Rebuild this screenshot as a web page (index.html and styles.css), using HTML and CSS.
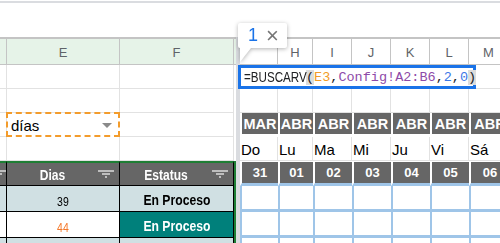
FILE: index.html
```html
<!DOCTYPE html>
<html lang="es">
<head>
  <meta charset="UTF-8">
  <title>Hoja de cálculo</title>
  <link rel="stylesheet" href="styles.css">
</head>
<body>
  <div class="topline"></div>

  <div class="sheet">
    <div class="freeze"></div>

    <!-- encabezado de columnas -->
    <div class="c hd sel"></div>
    <div class="c hd sel">E</div>
    <div class="c hd sel">F</div>
    <div class="c hd sel edge"></div>
    <div class="c hd"></div>
    <div class="c hd">H</div>
    <div class="c hd">I</div>
    <div class="c hd">J</div>
    <div class="c hd">K</div>
    <div class="c hd">L</div>
    <div class="c hd">M</div>

    <!-- fila 1 -->
    <div class="c"></div><div class="c"></div><div class="c"></div><div class="c edge"></div>
    <div class="c"></div><div class="c"></div><div class="c"></div><div class="c"></div>
    <div class="c"></div><div class="c"></div><div class="c"></div>

    <!-- fila 2 -->
    <div class="c"></div><div class="c"></div><div class="c"></div><div class="c edge"></div>
    <div class="c"></div><div class="c"></div><div class="c"></div><div class="c"></div>
    <div class="c"></div><div class="c"></div><div class="c"></div>

    <!-- fila 3: desplegable y meses -->
    <div class="c"></div>
    <div class="c dd">días<span class="dd-arrow"></span></div>
    <div class="c"></div><div class="c edge"></div>
    <div class="c mon">MAR</div>
    <div class="c mon">ABR</div>
    <div class="c mon">ABR</div>
    <div class="c mon">ABR</div>
    <div class="c mon">ABR</div>
    <div class="c mon">ABR</div>
    <div class="c mon">ABR</div>

    <!-- fila 4: días de la semana -->
    <div class="c"></div><div class="c"></div><div class="c"></div><div class="c edge"></div>
    <div class="c wd">Do</div>
    <div class="c wd">Lu</div>
    <div class="c wd">Ma</div>
    <div class="c wd">Mi</div>
    <div class="c wd">Ju</div>
    <div class="c wd">Vi</div>
    <div class="c wd">Sá</div>

    <!-- fila 5: cabecera de la tabla -->
    <div class="c th th-d"><svg class="flt" width="16" height="8" viewBox="0 0 16 8"><path d="M0 1h16M4 4h8M7 7h2" stroke="#dcdcdc" stroke-width="1.5"/></svg></div>
    <div class="c th"><span class="th-txt">Dias</span><svg class="flt" width="16" height="8" viewBox="0 0 16 8"><path d="M0 1h16M4 4h8M7 7h2" stroke="#dcdcdc" stroke-width="1.5"/></svg></div>
    <div class="c th"><span class="th-txt">Estatus</span><svg class="flt" width="16" height="8" viewBox="0 0 16 8"><path d="M0 1h16M4 4h8M7 7h2" stroke="#dcdcdc" stroke-width="1.5"/></svg></div>
    <div class="c edge green"></div>
    <div class="c num">31</div>
    <div class="c num">01</div>
    <div class="c num">02</div>
    <div class="c num">03</div>
    <div class="c num">04</div>
    <div class="c num">05</div>
    <div class="c num">06</div>

    <!-- fila 6 -->
    <div class="c td tint"></div>
    <div class="c td tint days"><span class="sq">39</span></div>
    <div class="c td tint status"><span class="sq">En Proceso</span></div>
    <div class="c edge green"></div>
    <div class="c box"></div><div class="c box"></div><div class="c box"></div><div class="c box"></div>
    <div class="c box"></div><div class="c box"></div><div class="c box"></div>

    <!-- fila 7 -->
    <div class="c td"></div>
    <div class="c td days late"><span class="sq">44</span></div>
    <div class="c td status teal"><span class="sq">En Proceso</span></div>
    <div class="c edge green"></div>
    <div class="c box"></div><div class="c box"></div><div class="c box"></div><div class="c box"></div>
    <div class="c box"></div><div class="c box"></div><div class="c box"></div>

    <!-- fila 8 -->
    <div class="c td tint"></div>
    <div class="c td tint"></div>
    <div class="c td tint"></div>
    <div class="c edge green"></div>
    <div class="c box"></div><div class="c box"></div><div class="c box"></div><div class="c box"></div>
    <div class="c box"></div><div class="c box"></div><div class="c box"></div>

    <!-- editor de fórmula y aviso -->
    <div class="editor">
      <span class="fx-name">=BUSCARV</span><span class="fx-args"><span class="par">(</span><span class="ref">E3</span>,<span class="rng">Config!A2:B6</span>,<span class="lit">2</span>,<span class="lit">0</span><span class="par">)</span></span>
    </div>
    <div class="tip">
      <span class="tip-num">1</span>
      <span class="tip-close">×</span>
    </div>
  </div>
</body>
</html>
```

FILE: styles.css
```css
body {
  margin: 0;
  background: #fff;
  font-family: "Liberation Sans", Arial, sans-serif;
  overflow: hidden;
}

.topline {
  height: 2px;
  margin-top: 1px;
  background-color: #dadce0;
}

.sheet {
  position: relative;
  margin-top: 34px;
  display: grid;
  grid-template-columns: 7px 113px 114px 2px 4px 38px 35px 39px 39px 39px 39px 40px;
  grid-template-rows: 28px 24px 24px 24px 24px 25px 26px 26px 26px;
}

.freeze {
  grid-column: 5;
  grid-row: 1 / span 9;
  background-color: #dadce0;
}

.c {
  box-sizing: border-box;
  border-right: 1px solid #e2e2e2;
  border-bottom: 1px solid #e2e2e2;
  display: flex;
  align-items: center;
  justify-content: center;
  overflow: hidden;
  white-space: nowrap;
}

.edge {
  border: none;
}

/* texto algo estrecho, como en la hoja */
.sq {
  display: inline-block;
  transform: scaleX(0.84);
}

/* encabezado de columnas */
.hd {
  border-top: 2px solid #c4c4c4;
  border-right-color: #c4c4c4;
  border-bottom-color: #c4c4c4;
  color: #5f6368;
  font-size: 13px;
  padding-top: 1px;
}

.hd.sel {
  background-color: #e6f3e8;
}

.hd.edge {
  border-top: 2px solid #c4c4c4;
  border-bottom: 1px solid #c4c4c4;
}

/* desplegable */
.dd {
  justify-content: space-between;
  border: 2px dashed #f39c2c;
  margin: -1px 0 0 -1px;
  padding: 2px 6px 0 3px;
  font-size: 15px;
  color: #000;
}

.dd-arrow {
  width: 0;
  height: 0;
  border-left: 5px solid transparent;
  border-right: 5px solid transparent;
  border-top: 5px solid #8a8a8a;
}

/* calendario */
.mon {
  background-color: #666;
  color: #fff;
  font-weight: bold;
  font-size: 14.5px;
  border-left: 2px solid #fff;
  border-right: none;
  border-bottom: 3px solid #fff;
  padding-top: 1px;
}

.wd {
  justify-content: flex-start;
  align-items: flex-end;
  padding: 0 0 2px 1px;
  font-size: 15px;
  color: #000;
}

.num {
  background-color: #666;
  color: #fff;
  font-weight: bold;
  font-size: 13px;
  border-top: 1px solid #fff;
  border-left: 2px solid #fff;
  border-right: none;
  border-bottom: 3px solid #9fc5e8;
}

.box {
  border-left: 2px solid #9fc5e8;
  border-right: none;
  border-bottom: 3px solid #9fc5e8;
}

/* tabla de estatus */
.th {
  background-color: #666;
  color: #fff;
  font-weight: bold;
  font-size: 14px;
  border-top: 2px solid #1e7e34;
  border-right-color: #000;
  border-bottom-color: #000;
}

.th-txt {
  flex: 1;
  text-align: center;
  padding-top: 1px;
  transform: scaleX(0.86);
}

.flt {
  margin-right: 5px;
  flex-shrink: 0;
}

.th-d {
  justify-content: flex-start;
}

.th-d .flt {
  margin-left: -10px;
}

.green {
  background-color: #1e7e34;
}

.td {
  border-right-color: #000;
  border-bottom-color: #000;
  padding-top: 6px;
}

.tint {
  background-color: #d0e0e3;
}

.days {
  font-size: 12.5px;
  color: #000;
}

.late {
  color: #f4792b;
}

.status {
  font-weight: bold;
  font-size: 14.5px;
  color: #000;
  padding-top: 3px;
}

.teal {
  background-color: #00807b;
  color: #fff;
}

/* editor de fórmula */
.editor {
  position: absolute;
  left: 238px;
  top: 28px;
  width: 238px;
  height: 24px;
  box-sizing: border-box;
  border: 3px solid #1a73e8;
  background-color: #fff;
  padding-left: 3px;
  display: flex;
  align-items: center;
  white-space: nowrap;
  color: #202124;
}

.fx-name {
  display: inline-block;
  width: 62px;
  font-size: 15.5px;
  transform: scaleX(0.75);
  transform-origin: 0 50%;
}

.fx-args {
  font-family: "Liberation Mono", monospace;
  font-size: 13.5px;
}

.par {
  background-color: #dcdcdc;
}

.ref {
  color: #f29b25;
}

.rng {
  color: #8e4aa8;
}

.lit {
  color: #3b78e7;
}

/* aviso de argumento */
.tip {
  position: absolute;
  left: 238px;
  top: -14px;
  width: 49px;
  height: 25px;
  box-sizing: border-box;
  background-color: #fff;
  border-radius: 2px;
  filter: drop-shadow(0 1px 2px rgba(0, 0, 0, 0.3));
  display: flex;
  align-items: center;
  gap: 8px;
  padding-left: 10px;
}

.tip::after {
  content: "";
  position: absolute;
  left: 2px;
  bottom: -14px;
  border-top: 14px solid #fff;
  border-right: 11px solid transparent;
}

.tip-num {
  color: #1a73e8;
  font-size: 18px;
}

.tip-close {
  color: #757575;
  font-size: 22px;
  line-height: 1;
}
```
